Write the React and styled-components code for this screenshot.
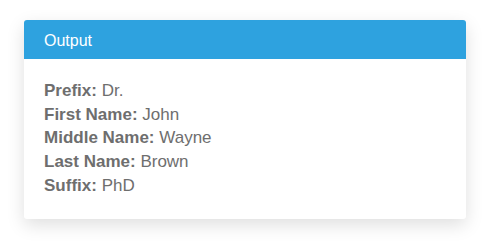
import React from "react"
import styled, { createGlobalStyle } from "styled-components"

const GlobalStyle = createGlobalStyle`
	body {
		margin: 0;
		background: #fff;
		font-family: "Liberation Sans", Arial, sans-serif;
	}
`

const fields = [
	{ label: "Prefix", value: "Dr." },
	{ label: "First Name", value: "John" },
	{ label: "Middle Name", value: "Wayne" },
	{ label: "Last Name", value: "Brown" },
	{ label: "Suffix", value: "PhD" },
]

const App = () => {
	return (
		<>
			<GlobalStyle />
			<Page>
				<Card>
					<Header>Output</Header>
					<Body>
						{fields.map(f => (
							<Line key={f.label}>
								<Label>{f.label}:</Label> {f.value}
							</Line>
						))}
					</Body>
				</Card>
			</Page>
		</>
	)
}

const Page = styled.div`
	padding: 20px 31px 28px 24px;
`

const Card = styled.div`
	width: 442px;
	background: #fff;
	border-radius: 3px;
	overflow: hidden;
	box-shadow: 0 6px 18px rgba(0, 0, 0, 0.13);
`

const Header = styled.div`
	height: 39px;
	background: #2ea2df;
	color: #fff;
	font-size: 16px;
	line-height: 41px;
	padding: 0 20px;
`

const Body = styled.div`
	padding: 20px 20px 21px;
`

const Line = styled.div`
	font-size: 17px;
	line-height: 23.7px;
	color: #6e6e6e;
`

const Label = styled.span`
	font-weight: bold;
	color: #6e6e6e;
`

export default App
